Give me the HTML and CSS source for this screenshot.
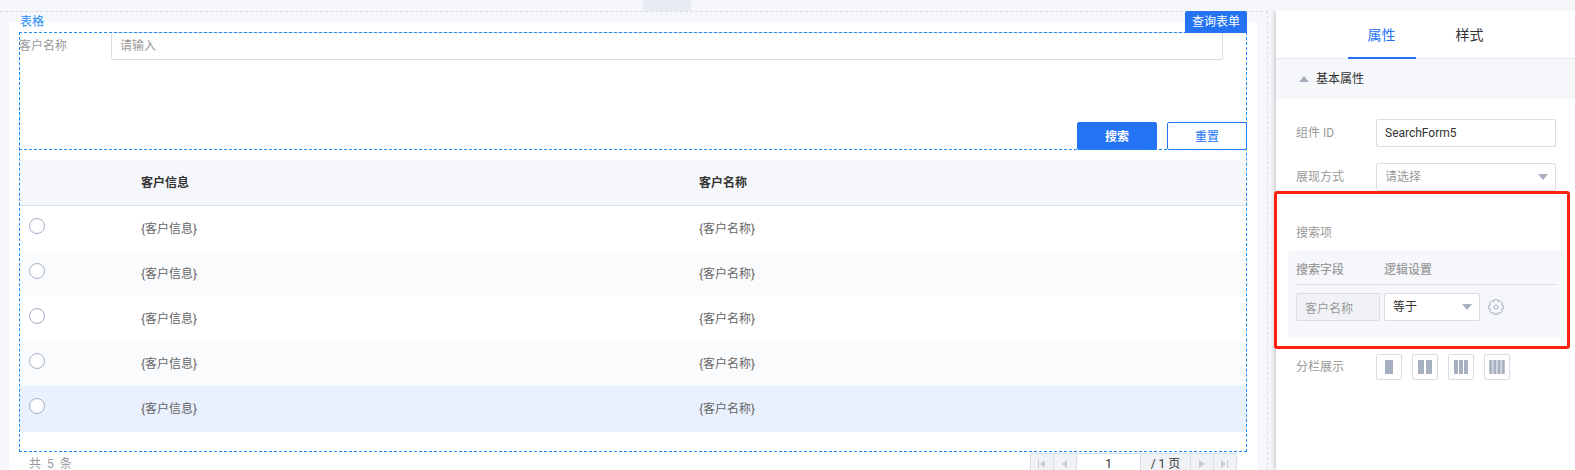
FILE: index.html
```html
<!DOCTYPE html>
<html lang="zh-CN">
<head>
    <meta charset="utf-8">
    <title>查询表单</title>
    <link rel="stylesheet" href="styles.css">
</head>
<body>
    <div class="topbar"><div class="topbar-handle"></div></div>
    <div class="main">
        <div class="canvas">
            <div class="card">
                <div class="selection">
                    <span class="tag-table">表格</span>
                    <span class="tag-form">查询表单</span>
                    <form class="search-form">
                        <div class="form-row">
                            <label for="customer">客户名称</label>
                            <input class="input" type="text" id="customer" placeholder="请输入">
                        </div>
                        <div class="form-actions">
                            <button type="button" class="btn btn-primary">搜索</button>
                            <button type="button" class="btn">重置</button>
                        </div>
                    </form>
                    <table class="data-table">
                        <thead>
                            <tr><th class="col-radio"></th><th>客户信息</th><th>客户名称</th></tr>
                        </thead>
                        <tbody>
                            <tr><td><input type="radio" name="row" aria-label="第1行"></td><td>{客户信息}</td><td>{客户名称}</td></tr>
                            <tr><td><input type="radio" name="row" aria-label="第2行"></td><td>{客户信息}</td><td>{客户名称}</td></tr>
                            <tr><td><input type="radio" name="row" aria-label="第3行"></td><td>{客户信息}</td><td>{客户名称}</td></tr>
                            <tr><td><input type="radio" name="row" aria-label="第4行"></td><td>{客户信息}</td><td>{客户名称}</td></tr>
                            <tr class="active"><td><input type="radio" name="row" aria-label="第5行"></td><td>{客户信息}</td><td>{客户名称}</td></tr>
                        </tbody>
                    </table>
                </div>
                <div class="table-footer">
                    <div class="total"><span>共</span><span>5</span><span>条</span></div>
                    <div class="pager">
                        <button type="button" class="page-btn" aria-label="首页"><svg width="8" height="8" viewBox="0 0 8 8"><path d="M1 0v8H0V0zM7 0v8L2 4z"/></svg></button>
                        <button type="button" class="page-btn" aria-label="上一页"><svg width="8" height="8" viewBox="0 0 8 8"><path d="M6 0v8L1 4z"/></svg></button>
                        <input class="page-input" type="text" value="1" aria-label="页码">
                        <span class="page-total">/ 1 页</span>
                        <button type="button" class="page-btn" aria-label="下一页"><svg width="8" height="8" viewBox="0 0 8 8"><path d="M1 0v8l6-4z"/></svg></button>
                        <button type="button" class="page-btn" aria-label="末页"><svg width="8" height="8" viewBox="0 0 8 8"><path d="M0 0v8l5-4zM6 0h1v8H6z"/></svg></button>
                    </div>
                </div>
            </div>
        </div>

        <div class="panel">
            <div class="tabs">
                <button type="button" class="tab tab-active">属性</button>
                <button type="button" class="tab">样式</button>
            </div>
            <button type="button" class="section-title">
                <svg width="10" height="6" viewBox="0 0 10 6"><path d="M5 0l5 6H0z"/></svg>基本属性
            </button>
            <div class="props">
                <div class="prop">
                    <label for="comp-id">组件 ID</label>
                    <input class="input" type="text" id="comp-id" value="SearchForm5">
                </div>
                <div class="prop">
                    <label for="mode">展现方式</label>
                    <div class="select-wrap">
                        <select class="input placeholder" id="mode"><option>请选择</option></select>
                        <svg width="10" height="6" viewBox="0 0 10 6"><path d="M0 0h10L5 6z"/></svg>
                    </div>
                </div>
            </div>
            <div class="highlight">
                <div class="group-label">搜索项</div>
                <div class="search-box">
                    <div class="search-head"><span>搜索字段</span><span>逻辑设置</span></div>
                    <div class="search-item">
                        <input class="input field" type="text" value="客户名称" aria-label="搜索字段" disabled>
                        <div class="select-wrap logic">
                            <select class="input" aria-label="逻辑设置"><option>等于</option></select>
                            <svg width="10" height="6" viewBox="0 0 10 6"><path d="M0 0h10L5 6z"/></svg>
                        </div>
                        <button type="button" class="gear" aria-label="设置">
                            <svg width="16" height="16" viewBox="0 0 16 16">
                                <path d="M6.3 .7H9.7L10.2 2.5L12.2 1.7L14.3 3.8L13.5 5.8L15.3 6.3V9.7L13.5 10.2L14.3 12.2L12.2 14.3L10.2 13.5L9.7 15.3H6.3L5.8 13.5L3.8 14.3L1.7 12.2L2.5 10.2L.7 9.7V6.3L2.5 5.8L1.7 3.8L3.8 1.7L5.8 2.5z"/>
                                <circle cx="8" cy="8" r="2"/>
                            </svg>
                        </button>
                    </div>
                </div>
            </div>
            <div class="columns">
                <span class="columns-label">分栏展示</span>
                <div class="columns-list">
                    <button type="button" class="col-btn" aria-label="一栏"><svg width="16" height="14" viewBox="0 0 16 14"><path d="M4 0h8v14H4z"/></svg></button>
                    <button type="button" class="col-btn" aria-label="两栏"><svg width="16" height="14" viewBox="0 0 16 14"><path d="M1 0h6v14H1zM9 0h6v14H9z"/></svg></button>
                    <button type="button" class="col-btn" aria-label="三栏"><svg width="16" height="14" viewBox="0 0 16 14"><path d="M1 0h4v14H1zM6 0h4v14H6zM11 0h4v14h-4z"/></svg></button>
                    <button type="button" class="col-btn" aria-label="四栏"><svg width="16" height="14" viewBox="0 0 16 14"><path class="light" d="M0 0h16v14H0z"/><path d="M.5 0h2.4v14H.5zM4.7 0h2.4v14H4.7zM8.9 0h2.4v14H8.9zM13.1 0h2.4v14h-2.4z"/></svg></button>
                </div>
            </div>
        </div>
    </div>
</body>
</html>
```

FILE: styles.css
```css
* {
    box-sizing: border-box;
}

body {
    margin: 0;
    height: 100vh;
    overflow: hidden;
    display: flex;
    flex-direction: column;
    background-color: #f5f7fa;
    color: #333;
    font-family: Roboto, "Noto Sans CJK SC", sans-serif;
    font-size: 12px;
    line-height: 18px;
}

button, input, select {
    margin: 0;
    padding: 0;
    border: 0;
    background: none;
    font: inherit;
    color: inherit;
}

button {
    cursor: pointer;
}

svg {
    display: block;
    fill: #a6b0c0;
}

.topbar {
    height: 11px;
    flex: none;
    padding-right: 241px;
    display: flex;
    justify-content: center;
}

.topbar-handle {
    width: 48px;
    background-color: #e8ebf3;
}

.main {
    flex: 1;
    min-height: 0;
    display: flex;
}

/* canvas */
.canvas {
    flex: 1;
    margin-right: 8px;
    padding: 10px 10px 0 9px;
    border-top: 1px dashed #dadde2;
    border-right: 1px dashed #dadde2;
    background-color: #f5f7fb;
}

.card {
    height: 100%;
    padding: 10px;
    background-color: #fff;
}

.selection {
    position: relative;
    padding-bottom: 20px;
    outline: 1px dashed #1e8df5;
    outline-offset: -1px;
}

.tag-table {
    position: absolute;
    top: -19px;
    left: 1px;
    color: #1e8df5;
}

.tag-form {
    position: absolute;
    top: -21px;
    right: 0;
    padding: 2px 7px;
    border-radius: 2px 2px 0 0;
    background-color: #2373f4;
    color: #fff;
}

.search-form {
    outline: 1px dashed #1e8df5;
    outline-offset: -1px;
}

.form-row {
    display: flex;
    align-items: center;
    padding-right: 24px;
    color: #999;
}

.form-row label {
    width: 92px;
}

.input {
    flex: 1;
    width: 100%;
    min-width: 0;
    height: 28px;
    padding: 0 8px;
    border: 1px solid #dadce5;
    border-radius: 2px;
    background-color: #fff;
    color: #333;
    appearance: none;
}

.input::placeholder {
    color: #999;
}

.form-actions {
    display: flex;
    justify-content: flex-end;
    gap: 10px;
    padding-top: 62px;
}

.btn {
    width: 80px;
    height: 28px;
    padding-top: 2px;
    border: 1px solid #2373f4;
    border-radius: 2px;
    color: #2373f4;
}

.btn-primary {
    background-color: #2373f4;
    color: #fff;
    font-weight: bold;
}

/* table */
.data-table {
    width: 100%;
    margin-top: 10px;
    border-collapse: separate;
    border-spacing: 0;
    table-layout: fixed;
}

.data-table th {
    height: 46px;
    padding: 0 10px;
    border-bottom: 1px solid #d8e2ef;
    background-color: #f5f7fb;
    text-align: left;
    font-weight: bold;
}

.col-radio {
    width: 112px;
}

.data-table td {
    height: 45px;
    padding: 0 10px;
    color: #666;
}

.data-table tr:nth-child(even) td {
    background-color: #fafbfd;
}

.data-table .active td {
    height: 46px;
    border-bottom: 1px solid #e9f0fe;
    background-color: #e9f0fe;
}

.data-table input {
    display: block;
    width: 16px;
    height: 16px;
    margin-bottom: 5px;
    border: 1px solid #a6b0c6;
    border-radius: 50%;
    background-color: #fff;
    appearance: none;
}

.table-footer {
    display: flex;
    justify-content: space-between;
    padding: 1px 10px 0;
    color: #999;
}

.total {
    display: flex;
    gap: 6px;
    padding-top: 2px;
}

.pager {
    display: flex;
    height: 28px;
    border: 1px solid #dadee6;
    border-radius: 2px;
    background-color: #f0f2f6;
    color: #333;
}

.page-btn {
    width: 22px;
    padding: 0 0 6px 7px;
}

.page-btn svg {
    fill: #c6ccd7;
}

.page-btn + .page-btn {
    width: 23px;
    border-left: 1px solid #dadee6;
}

.page-input {
    width: 64px;
    padding-bottom: 6px;
    border-left: 1px solid #dadee6;
    background-color: #fff;
    text-align: center;
}

.page-total {
    width: 51px;
    border: solid #dadee6;
    border-width: 0 1px;
    line-height: 20px;
    text-align: center;
}

/* property panel */
.panel {
    width: 299px;
    flex: none;
    background-color: #fff;
    box-shadow: 0 0 6px rgba(0, 0, 0, 0.3);
    clip-path: inset(0 0 0 -8px);
    color: #999;
}

.tabs {
    display: flex;
    justify-content: center;
    gap: 20px;
    height: 48px;
    border-bottom: 1px solid #e4e7ed;
    color: #333;
    font-size: 14px;
}

.tab {
    width: 68px;
    height: 48px;
    padding-top: 2px;
    border-bottom: 2px solid transparent;
}

.tab-active {
    border-color: #2373f4;
    color: #2373f4;
}

.section-title {
    display: flex;
    align-items: center;
    gap: 7px;
    width: 100%;
    height: 40px;
    padding-left: 23px;
    background-color: #f5f7fb;
    color: #333;
}

.props {
    display: flex;
    flex-direction: column;
    gap: 16px;
    padding: 20px 19px 0 20px;
}

.prop {
    display: flex;
    align-items: center;
}

.prop label,
.columns-label {
    width: 80px;
}

.select-wrap {
    flex: 1;
    display: grid;
    align-items: center;
}

.select-wrap > * {
    grid-area: 1 / 1;
}

.select-wrap svg {
    justify-self: end;
    margin-right: 8px;
    pointer-events: none;
}

.placeholder {
    color: #999;
}

.highlight {
    margin: 0 5px 0 -2px;
    padding: 30px 3px 8px 11px;
    border: 3px solid #ff2010;
    border-radius: 3px;
}

.group-label {
    padding-left: 8px;
}

.search-box {
    margin-top: 9px;
    padding: 8px 8px 17px;
    border-radius: 2px;
    background-color: #f5f7fb;
}

.search-head {
    display: flex;
    height: 26px;
    padding-top: 2px;
    border-bottom: 1px solid #dadde5;
    font-weight: 500;
}

.search-head span {
    width: 88px;
}

.search-item {
    display: flex;
    align-items: center;
    gap: 4px;
    padding-top: 8px;
}

.search-item .field {
    flex: none;
    width: 84px;
    background-color: #f0f2f6;
    color: #999;
}

.logic {
    flex: none;
    width: 96px;
}

.gear {
    margin-left: 4px;
}

.gear svg {
    fill: none;
    stroke: #a6b0c6;
    stroke-linejoin: round;
}

.columns {
    display: flex;
    align-items: center;
    padding: 5px 20px 0;
}

.columns-list {
    display: flex;
    gap: 10px;
}

.col-btn {
    display: flex;
    align-items: center;
    justify-content: center;
    width: 26px;
    height: 26px;
    border: 1px solid #dadce5;
    border-radius: 2px;
    background-color: #fff;
}

.light {
    fill: #d5dae2;
}
```
